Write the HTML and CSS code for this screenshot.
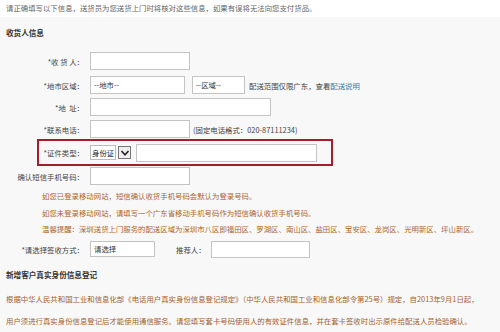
FILE: index.html
```html
<!DOCTYPE html>
<html lang="zh">
<head>
<meta charset="utf-8">
<link rel="stylesheet" href="styles.css">
</head>
<body>
<div class="notice">请正确填写以下信息，送货员为您送货上门时将核对这些信息，如果有误将无法向您支付货品。</div>
<div class="main">
  <div class="title t1">收货人信息</div>
  <div class="row r-name">
    <div class="label">*收 货 人：</div>
    <div class="input w100"></div>
  </div>
  <div class="row r-area">
    <div class="label">*地市区域：</div>
    <div class="input w95 sel">--地市--</div>
    <div class="input w53 sel">--区域--</div>
    <span class="hint">配送范围仅限广东，查看<span class="link">配送说明</span></span>
  </div>
  <div class="row r-addr">
    <div class="label">*地&nbsp;&nbsp;址：</div>
    <div class="input w180"></div>
  </div>
  <div class="row r-tel">
    <div class="label">*联系电话：</div>
    <div class="input w100"></div>
    <span class="hint">(固定电话格式：020-87111234)</span>
  </div>
  <div class="row boxed">
    <div class="label">*证件类型：</div>
    <div class="select"><span class="opt">身份证</span><span class="arrow"><svg width="10" height="8" viewBox="0 0 10 8"><path d="M1.5 2 L5 5.8 L8.5 2" fill="none" stroke="#222" stroke-width="1.6"/></svg></span></div>
    <div class="input w181"></div>
  </div>
  <div class="row r-sms">
    <div class="label">确认短信手机号码：</div>
    <div class="input w100"></div>
  </div>
  <div class="tips">
    <p>如您已登录移动网站，短信确认收货手机号码会默认为登录号码。</p>
    <p>如您未登录移动网站，请填写一个广东省移动手机号码作为短信确认收货手机号码。</p>
    <p>温馨提醒：深圳送货上门服务的配送区域为深圳市八区即福田区、罗湖区、南山区、盐田区、宝安区、龙岗区、光明新区、坪山新区。</p>
  </div>
  <div class="row r-sign">
    <div class="label">*请选择签收方式：</div>
    <div class="input w65 sel">请选择</div>
    <span class="ref">推荐人：</span>
    <div class="input w99"></div>
  </div>
  <div class="title t2">新增客户真实身份信息登记</div>
  <div class="para">
    <p>根据中华人民共和国工业和信息化部《电话用户真实身份信息登记规定》（中华人民共和国工业和信息化部令第25号）规定，自2013年9月1日起，</p>
    <p>用户须进行真实身份信息登记后才能使用通信服务。请您填写套卡号码使用人的有效证件信息，并在套卡签收时出示原件给配送人员检验确认。</p>
  </div>
</div>
</body>
</html>
```
FILE: styles.css
```css
* { box-sizing: border-box; margin: 0; padding: 0; }
html, body { width: 500px; height: 332px; overflow: hidden; }
body {
  background: #f8f8f8;
  font-family: "Noto Sans CJK SC", "Liberation Sans", sans-serif;
  font-size: 7.4px;
  color: #444;
}
.notice {
  background: #fff;
  height: 17px;
  line-height: 16px;
  padding-left: 6px;
  color: #666;
  white-space: nowrap;
}
.main { padding-top: 8px; }
.title {
  font-weight: bold;
  color: #333;
  padding-left: 6px;
  font-size: 7.6px;
  height: 16px;
  line-height: 16px;
}
.t1 { margin-bottom: 11px; }
.row {
  display: flex;
  align-items: center;
  white-space: nowrap;
}
.label {
  width: 84px;
  text-align: right;
  margin-right: 6px;
  color: #444;
  flex-shrink: 0;
}
.input {
  height: 18px;
  background: #fff;
  border: 1px solid #c4c4c4;
  flex-shrink: 0;
  line-height: 16px;
  padding-left: 3px;
  color: #333;
}
.w100 { width: 100px; }
.w95 { width: 95px; }
.w53 { width: 53px; margin-left: 7px; }
.w180 { width: 181px; }
.w181 { width: 181px; margin-left: 5px; }
.w65 { width: 65px; height: 16px; line-height: 14px; }
.w99 { width: 99px; margin-left: 5px; height: 17px; }
.hint { margin-left: 4px; color: #444; }
.link { color: #2a7fb0; }
.r-name { height: 18px; margin-bottom: 6px; }
.r-area { height: 18px; margin-bottom: 4px; }
.r-addr { height: 18px; margin-bottom: 4px; }
.r-tel { height: 18px; margin-bottom: 1px; }
.r-tel .hint { margin-left: 3px; }
.boxed {
  margin-left: 37px;
  width: 296px;
  height: 27px;
  border: 2px solid #a51e2a;
  margin-bottom: 1px;
}
.boxed .label { width: 45px; margin-right: 6px; }
.boxed .input { height: 18px; }
.select {
  display: flex;
  align-items: center;
  height: 16px;
}
.opt {
  background: #fff;
  border: 1px solid #bbb;
  height: 15px;
  line-height: 13px;
  padding: 0 1px;
  width: 26px;
  color: #222;
  overflow: hidden;
}
.arrow {
  margin-left: 2px;
  width: 13px;
  height: 13px;
  border: 1px solid #777;
  background: #eee;
  display: flex;
  align-items: center;
  justify-content: center;
}
.r-sms { height: 18px; margin-bottom: 3px; }
.tips { padding-left: 42px; color: #b0642a; }
.tips p { height: 16.5px; line-height: 16px; white-space: nowrap; }
.r-sign { height: 17px; margin-top: 3px; margin-bottom: 9px; }
.ref { margin-left: 21px; color: #444; }
.t2 { margin-bottom: 5px; }
.para { padding-left: 6px; color: #a65f2a; }
.para p { height: 22px; line-height: 22px; white-space: nowrap; }
```
